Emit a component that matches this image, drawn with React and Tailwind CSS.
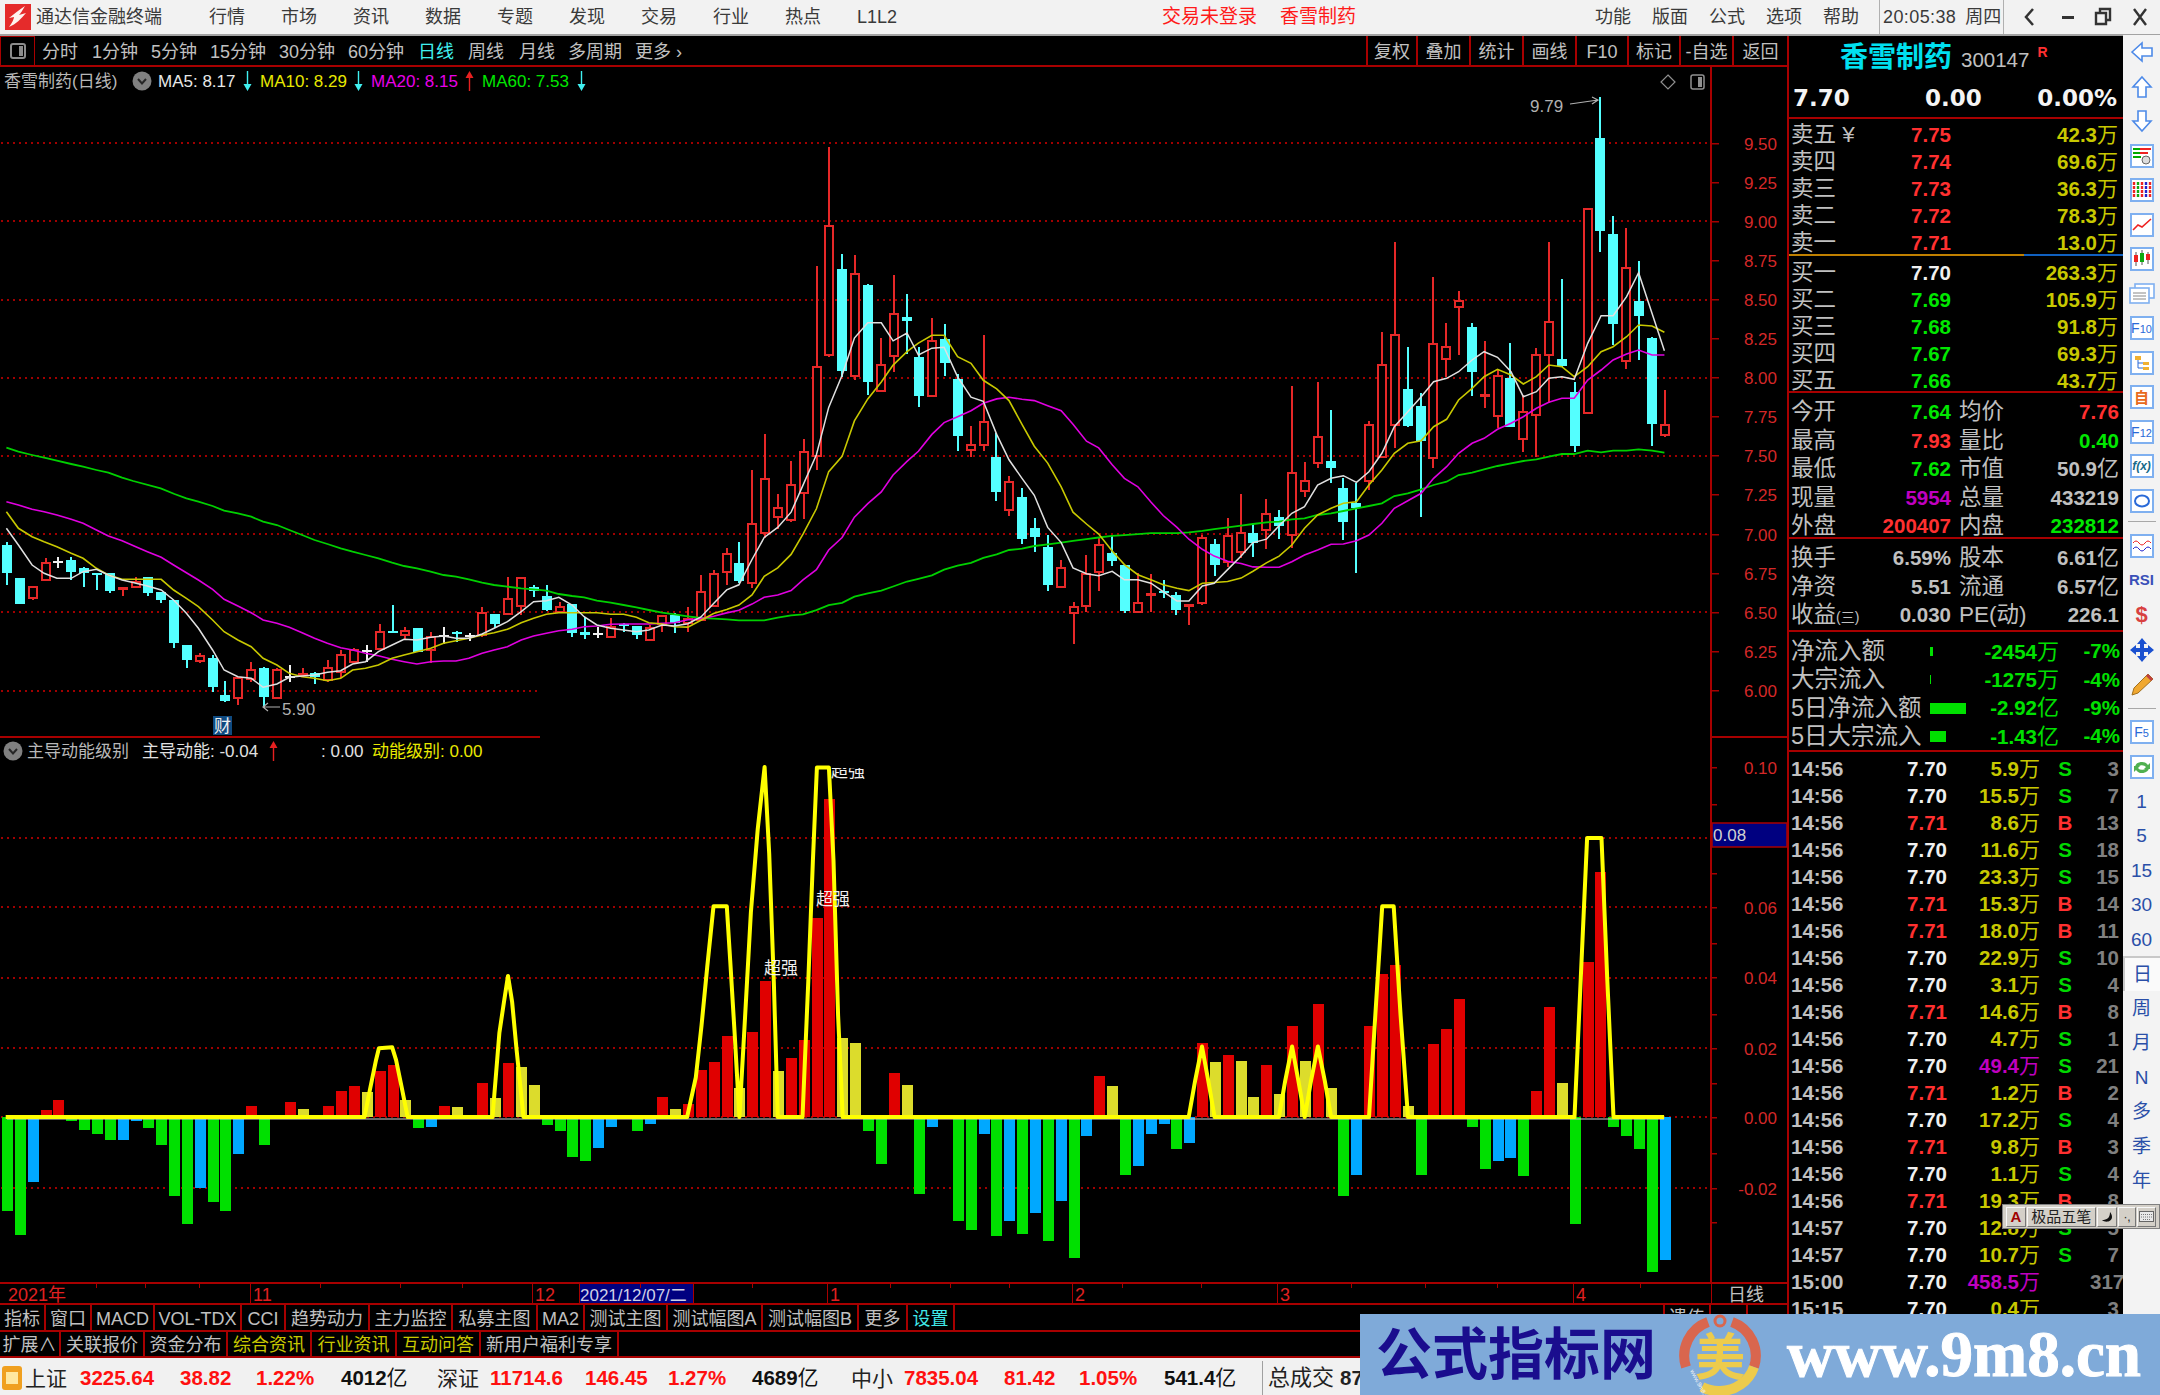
import React from 'react';

const parse = (s) => s.trim().split(/\s+/).map((t) => {
  const [a, b, c, d] = t.slice(1).split(',').map(Number);
  return { k: t[0], a, b, c, d };
});
const segA = parse(`c195,278,185,315 c293,373,293,373 r322,355,322,360 r250,300,235,303 w245,245,230,265 c240,275,232,300 c263,280,260,320 c280,285,280,330 c280,333,280,338 r322,328,322,347 r305,320,290,325 c290,338,290,347 c337,360,337,370 c360,490,360,505 c495,540,495,563 r528,543,520,550 c535,622,525,635 c645,662,603,666 r595,655,590,675 r570,598,545,605 c563,652,560,680 r570,655,565,658 w590,590,555,605 r578,588,565,590 c578,592,575,612 r565,600,540,605 r525,575,510,595 r510,545,505,548 w512,512,495,545 r457,508,432,510 c452,455,375,455 r452,464,442,478 c443,515,443,515 r472,510,455,548 w468,468,442,492 c455,460,452,485 w467,467,460,483 r398,465,380,470 c402,432,402,445 r358,403,290,405 r295,377,295,405 c320,333,315,352 c348,390,315,392 r380,397,365,400 c372,458,372,472 c455,464,410,478 w462,462,440,475 r442,472,415,473 c432,437,430,455 c438,465,438,478 r443,480,435,482 r407,432,405,455 c405,430,400,460`);
const segB = parse(`r1475,1488,1440,1515 r1395,1480,1345,1480 r1342,1438,1332,1440 r1285,1338,1265,1375 c1310,1365,1248,1370 r1195,1370,1035,1385 r1062,1223,928,1235 r1147,1175,1105,1210 r1080,1183,1008,1190 r982,1103,945,1180 r730,993,432,1035 r313,695,80,700 c440,742,395,760 r455,757,400,768 c488,776,485,812 r725,803,645,805 r574,698,458,745 c582,596,516,692 c702,817,670,848 r655,817,587,820 c648,718,604,758 c765,936,750,980 r962,975,905,998 r894,962,635,980 c998,1100,925,1127 r1072,1153,1052,1170 c1115,1238,1088,1255 c1208,1233,1178,1278 c1262,1376,1228,1392 r1325,1380,1302,1385 r1440,1458,1427,1550 r1342,1437,1288,1456 r1258,1338,1235,1392 c1280,1305,1228,1318 c1316,1452,1316,1458 r1428,1455,1340,1458 r1400,1409,1342,1455 c1394,1398,1360,1415 c1405,1450,1395,1465 r1432,1437,1432,1495 r1237,1428,1228,1434 c1253,1317,1240,1350 r1232,1308,1178,1322 r1222,1278,1105,1295 c1222,1250,1195,1292 r1165,1212,1120,1270 c1175,1200,1155,1238`);
const segC = parse(`r1180,1365,917,1405 r1202,1232,1147,1250 r1072,1150,905,1165 c1143,1165,990,1210 c1225,1325,1195,1380 c1270,1285,1210,1480 r1035,1202,1022,1230 r855,1130,755,1135 r765,1035,485,1105 c927,1038,800,1042 c977,1082,940,1312 r792,1135,590,1165 r802,838,728,890 r662,680,633,825 c742,875,728,948 r942,945,783,985 r888,1008,870,1045 c895,1040,790,1042 r995,1077,945,1115 r825,1005,805,1130 r725,825,485,968 c837,858,597,860 c935,1097,905,1115 r387,1000,387,1000 c175,452,52,517 c463,732,408,795 r563,843,445,868 c662,708,543,840 c773,1032,770,1097 r1036,1065,930,1070`);
const candles = [
  ...segA.map((d) => ({ ...d, f: (y) => 480 + y / 3 })),
  ...segB.map((d) => ({ ...d, f: (y) => 120 + y / 2.958 })),
  ...segC.map((d) => ({ ...d, f: (y) => 80 + y / 3 })),
];
const barX = (i) => 7 + 12.85 * i;

const pts = (s) => s.trim().split(/\s+/).map((p) => p.split(',').map(Number));
const line = (a, b, c) => [
  ...pts(a).map(([x, y]) => [x / 2.1778, 480 + y / 3]).filter(([x]) => x < 682),
  ...pts(b).map(([x, y]) => [680 + x / 2.529, 120 + y / 2.958]).filter(([x]) => x >= 682 && x < 1285),
  ...pts(c).map(([x, y]) => [1230 + x / 2.751, 80 + y / 3]).filter(([x]) => x >= 1285),
].map(([x, y]) => `${x.toFixed(1)},${y.toFixed(1)}`).join(' ');

const ma5 = line(
  '14,145 40,195 70,255 96,280 124,295 155,295 181,275 210,268 236,285 266,300 292,308 321,318 351,330 378,360 406,400 432,445 463,510 488,570 518,590 547,595 573,622 603,612 630,592 658,588 685,585 713,577 742,572 768,552 796,545 824,515 854,495 880,478 908,480 938,472 966,468 993,475 1021,475 1050,462 1076,445 1105,425 1135,395 1162,365 1190,362 1217,352 1246,375 1272,410 1300,435 1330,445 1358,450 1386,455 1413,450 1442,435 1469,438',
  '20,1490 53,1470 85,1430 118,1390 149,1375 182,1300 213,1235 247,1205 281,1160 311,1080 345,990 376,850 410,755 441,645 475,600 509,600 539,653 574,630 603,695 637,675 668,672 702,760 736,820 767,832 801,930 832,1005 865,1060 896,1110 930,1205 964,1250 994,1325 1028,1342 1059,1348 1093,1335 1124,1360 1158,1360 1191,1370 1222,1395 1257,1423 1287,1423 1321,1378 1351,1370 1385,1330 1419,1290 1449,1250 1483,1240 1515,1200',
  '170,1300 205,1280 241,1215 278,1195 312,1187 348,1207 382,1175 418,1120 452,1040 489,995 526,950 560,905 596,895 629,875 666,840 699,815 736,832 773,875 807,950 843,935 877,895 913,890 947,898 984,790 1021,707 1054,707 1091,650 1124,578 1161,700 1195,812');
const ma10 = line(
  '14,95 40,145 70,170 96,185 124,200 155,220 181,235 210,265 236,285 266,298 292,298 321,298 351,298 378,330 406,355 432,380 463,420 488,455 518,480 547,500 573,535 603,555 630,580 658,590 685,595 713,602 742,595 768,570 796,565 824,555 854,535 880,525 908,515 938,505 966,490 993,482 1021,475 1050,465 1076,458 1105,448 1135,428 1162,415 1190,403 1217,398 1246,398 1272,398 1300,398 1330,403 1358,403 1386,412 1413,428 1442,432 1469,440',
  '20,1500 53,1480 85,1460 118,1448 149,1435 182,1405 213,1350 247,1325 281,1285 311,1225 345,1150 376,1040 410,995 441,890 475,825 509,775 539,725 574,685 603,660 637,637 668,637 702,700 736,720 767,770 801,795 832,830 865,900 896,965 930,1015 964,1085 994,1160 1028,1195 1059,1225 1093,1275 1124,1315 1158,1345 1191,1360 1222,1375 1257,1385 1287,1392 1321,1370 1351,1368 1385,1365 1419,1355 1449,1335 1483,1310 1515,1290',
  '170,1395 205,1345 241,1305 278,1285 312,1270 348,1265 382,1215 418,1170 452,1120 489,1090 526,1082 560,1040 596,1018 629,960 666,925 699,890 736,868 773,885 807,912 843,890 877,855 913,860 947,890 984,860 1021,815 1054,800 1091,770 1124,735 1161,738 1195,757');
const ma20 = line(
  '14,65 40,75 70,88 96,95 124,105 155,118 181,130 210,150 236,168 266,182 292,198 321,215 351,232 378,255 406,278 432,300 463,328 488,358 518,378 547,398 573,420 603,430 630,442 658,458 685,475 713,490 742,503 768,510 796,520 824,527 854,538 880,545 908,552 938,545 966,543 993,543 1021,535 1050,520 1076,510 1105,500 1135,480 1162,468 1190,460 1217,452 1246,448 1272,440 1300,438 1330,433 1358,432 1386,432 1413,432 1442,430 1469,428',
  '20,1478 53,1475 85,1468 118,1458 149,1450 182,1432 213,1412 247,1405 281,1392 311,1360 345,1330 376,1272 410,1235 441,1175 475,1135 509,1100 539,1050 574,1010 603,980 637,930 668,895 702,878 736,860 767,838 801,825 832,820 865,826 896,830 930,845 964,860 994,900 1028,950 1059,970 1093,1020 1124,1060 1158,1085 1191,1130 1222,1170 1257,1205 1287,1240 1321,1270 1351,1290 1385,1305 1419,1312 1449,1322 1483,1323 1515,1323',
  '170,1445 205,1425 241,1410 278,1393 312,1392 348,1382 382,1365 418,1330 452,1285 489,1262 526,1240 560,1195 596,1160 629,1120 666,1090 699,1075 736,1048 773,1030 807,1010 843,985 877,967 913,955 947,955 984,900 1021,870 1054,840 1091,822 1124,810 1161,825 1195,825');
const ma60 = line(
  '14,-97 40,-85 70,-75 96,-67 124,-58 155,-48 181,-40 210,-30 236,-22 266,-7 290,3 350,25 380,42 406,55 432,65 463,78 488,92 518,100 547,110 573,125 603,135 630,150 658,165 685,180 713,192 742,205 768,215 796,225 824,235 854,248 880,258 908,265 938,275 966,285 993,290 1021,298 1050,308 1076,315 1105,320 1135,325 1162,328 1190,332 1217,342 1246,348 1272,352 1300,362 1330,368 1358,375 1386,382 1413,390 1442,398 1469,403',
  '20,1468 53,1473 85,1475 118,1477 149,1480 182,1480 213,1480 247,1472 281,1465 311,1462 345,1450 376,1435 410,1428 441,1410 475,1400 509,1392 539,1380 574,1365 603,1357 637,1347 668,1330 702,1318 736,1310 767,1295 801,1285 832,1272 865,1268 896,1260 930,1255 964,1250 994,1245 1028,1240 1059,1235 1093,1230 1124,1228 1158,1225 1191,1222 1222,1222 1257,1222 1287,1220 1321,1215 1351,1210 1385,1205 1419,1200 1449,1195 1483,1190 1515,1188',
  '170,1318 205,1315 241,1305 278,1300 312,1293 348,1285 382,1278 418,1270 452,1248 489,1240 526,1228 560,1215 596,1205 629,1185 666,1178 699,1168 736,1158 773,1150 807,1143 843,1138 877,1130 913,1122 947,1122 984,1112 1021,1117 1054,1112 1091,1112 1124,1108 1161,1112 1195,1118');

const osc = 'g1367 g1437 b1283 r1075 r1045 g1105 g1132 g1145 g1162 b1162 b1105 g1128 g1175 g1323 g1406 b1302 g1341 g1367 b1201 r1063 g1175 n0 r1050 y1072 n0 r1063 r1018 r1006 y1023 r962 r945 y1045 g1128 b1123 r1063 y1067 n0 r997 y1040 r937 y950 y1002 g1118 g1136 g1210 g1222 b1184 b1123 n0 g1136 b1114 r1037 y1071 r1058 r958 r936 r861 y1010 r849 r700 y962 r923 r870 r518 r172 y866 y879 g1136 g1232 r967 y1001 g1318 b1123 n0 g1397 g1423 b1145 g1440 b1397 g1436 b1375 g1454 b1340 g1505 b1149 r975 y1006 g1262 b1236 b1145 b1114 g1188 b1171 r880 y936 r914 y931 y1036 r945 y1027 r830 y931 r767 y1010 g1323 b1262 r830 r680 r654 y1062 g1262 r884 r840 r753 g1123 g1245 b1223 b1214 g1267 r1018 r775 y997 g1406 r644 r382 g1123 g1149 g1188 g1545 b1510'.split(' ');
const oscColor = { g: '#00e000', b: '#00a8ff', r: '#e00000', y: '#dcdc2c' };
const oY = (z) => 740 + z / 2.904;

const yellowA = '10,1095 635,1095 645,1010 655,930 660,895 683,892 690,930 700,1010 710,1095 858,1095 870,850 878,760 885,685 892,760 900,900 912,1095 1197,1095 1212,980 1222,830 1232,660 1243,483 1266,483 1272,640 1280,860 1288,1095 1296,860 1308,500 1320,260 1332,78 1340,330 1348,700 1355,1095 1398,1095 1408,700 1416,350 1423,80 1444,80 1452,350 1460,800 1468,1095 1560,1095';
const yellowB = '0,1095 503,1095 514,990 526,890 537,990 548,1095 660,1095 671,990 683,890 694,990 705,1095 716,990 728,890 740,990 751,1095 817,1095 828,800 840,483 860,483 872,800 885,1095 1175,1095 1186,690 1197,285 1222,285 1232,690 1243,1095 1331,1095';
const yellow = [
  ...pts(yellowA).map(([x, y]) => [x / 1.742, oY(y)]),
  ...pts(yellowB).map(([x, y]) => [900 + x / 1.742, oY(y)]),
].map(([x, y]) => `${x.toFixed(1)},${y.toFixed(1)}`).join(' ');

const mainLabels = ['9.50', '9.25', '9.00', '8.75', '8.50', '8.25', '8.00', '7.75', '7.50', '7.25', '7.00', '6.75', '6.50', '6.25', '6.00'];
const oscLabels = [['0.10', 767], ['0.06', 907], ['0.04', 977], ['0.02', 1048], ['0.00', 1117], ['-0.02', 1188]];
const oscTicks = [767, 804, 838, 873, 907, 943, 977, 1014, 1048, 1083, 1117, 1153, 1188, 1222];

function OscBars() {
  const zero = Math.round(oY(1095));
  return osc.map((t, i) => {
    if (t[0] === 'n') return null;
    const y = Math.round(oY(Number(t.slice(1))));
    const x = Math.round(barX(i)) - 5;
    const top = Math.min(y, zero);
    return <rect key={i} x={x} y={top} width="11" height={Math.abs(zero - y)} fill={oscColor[t[0]]} shapeRendering="crispEdges" />;
  });
}

function MainChart() {
  return (
    <svg width="1787" height="1215" viewBox="0 67 1787 1215" className="block">
      <defs>
        <clipPath id="topclip"><rect x="800" y="768" width="100" height="30" /></clipPath>
      </defs>
      {[143, 221, 300, 378, 456, 534, 612].map((y) => (
        <line key={y} x1="1" x2="1710" y1={y} y2={y} stroke="#a00000" strokeWidth="1.5" strokeDasharray="2 4" shapeRendering="crispEdges" />
      ))}
      <line x1="1" x2="540" y1="691" y2="691" stroke="#a00000" strokeWidth="1.5" strokeDasharray="2 4" shapeRendering="crispEdges" />
      {[838, 907, 978, 1048, 1117, 1188].map((y) => (
        <line key={y} x1="1" x2="1710" y1={y} y2={y} stroke="#a00000" strokeWidth="1.5" strokeDasharray="2 4" shapeRendering="crispEdges" />
      ))}
      <rect x="1710" y="67" width="2" height="1215" fill="#a80000" />
      <rect x="0" y="736" width="540" height="2" fill="#a80000" />
      <rect x="1710" y="736" width="77" height="2" fill="#a80000" />
      {mainLabels.map((t, i) => {
        const y = 143 + i * 39.05;
        return (
          <g key={t}>
            <rect x="1711" y={Math.round(y)} width="8" height="1.5" fill="#a80000" />
            <text x="1777" y={y + 7} textAnchor="end" fontSize="17" fill="#d42828">{t}</text>
          </g>
        );
      })}
      {oscTicks.map((y) => <rect key={y} x="1711" y={y} width="6" height="1.5" fill="#a80000" />)}
      {oscLabels.map(([t, y]) => (
        <text key={t} x="1777" y={y + 7} textAnchor="end" fontSize="17" fill="#d42828">{t}</text>
      ))}
      <rect x="1712" y="823" width="75" height="24" fill="#000080" stroke="#a80000" strokeWidth="1.5" />
      <text x="1713" y="841" fontSize="17" fill="#d0d0d0">0.08</text>

      {candles.map((c, i) => {
        const x = Math.round(barX(i));
        const top = Math.round(c.f(c.a));
        const bot = Math.round(c.f(c.b));
        const wt = Math.round(c.f(c.c));
        const wb = Math.round(c.f(c.d));
        if (c.k === 'w') {
          return (
            <g key={i} fill="#f0f0f0" shapeRendering="crispEdges">
              <rect x={x - 1} y={wt} width="2" height={wb - wt} />
              <rect x={x - 5} y={top - 1} width="10" height="2" />
            </g>
          );
        }
        if (c.k === 'c') {
          return (
            <g key={i} fill="#54ffff" shapeRendering="crispEdges">
              <rect x={x - 1} y={wt} width="2" height={wb - wt} />
              <rect x={x - 5} y={top} width="10" height={Math.max(bot - top, 2)} />
            </g>
          );
        }
        const thin = bot - top < 4;
        return (
          <g key={i} shapeRendering="crispEdges">
            {wb > wt && (
              <>
                <rect x={x - 1} y={wt} width="2" height={Math.max(top - wt, 0)} fill="#e62828" />
                <rect x={x - 1} y={bot} width="2" height={Math.max(wb - bot, 0)} fill="#e62828" />
              </>
            )}
            {thin ? (
              <>
                <rect x={x - 5} y={top} width="10" height="3" fill="#e62828" />
                <rect x={x - 1} y={wt} width="2" height={wb - wt} fill="#e62828" />
              </>
            ) : (
              <rect x={x - 4} y={top} width="8" height={bot - top} fill="#000" stroke="#e62828" strokeWidth="2" />
            )}
          </g>
        );
      })}
      <polyline points={ma60} fill="none" stroke="#00d000" strokeWidth="1.8" />
      <polyline points={ma20} fill="none" stroke="#e000e0" strokeWidth="1.6" />
      <polyline points={ma10} fill="none" stroke="#c8c800" strokeWidth="1.6" />
      <polyline points={ma5} fill="none" stroke="#e0e0e0" strokeWidth="1.5" />

      <text x="1530" y="112" fontSize="17" fill="#b0b0b0">9.79</text>
      <path d="M1570 104 L1598 100 M1592 97 L1598 100 L1592 104" fill="none" stroke="#b0b0b0" strokeWidth="1.2" />
      <text x="282" y="715" fontSize="17" fill="#b0b0b0">5.90</text>
      <path d="M263 707 L280 707 M268 703 L263 707 L268 711" fill="none" stroke="#b0b0b0" strokeWidth="1.2" />
      <rect x="213" y="716" width="19" height="19" fill="#0f4a80" />
      <text x="222.5" y="732" textAnchor="middle" fontSize="17" fill="#f0f0f0">财</text>
      <path d="M1668 75 L1675 82 L1668 89 L1661 82 Z" fill="none" stroke="#909090" strokeWidth="1.2" />
      <rect x="1691" y="75" width="13" height="14" rx="2" fill="none" stroke="#909090" strokeWidth="1.5" />
      <rect x="1698" y="77" width="4" height="10" fill="#909090" />

      <OscBars />
      <line x1="7" x2="1664" y1="1119" y2="1119" stroke="#d0d0d0" strokeWidth="1" />
      <polyline points={yellow} fill="none" stroke="#ffff00" strokeWidth="4" strokeLinejoin="round" />
      <text x="781" y="974" textAnchor="middle" fontSize="17" fill="#f0f0f0">超强</text>
      <text x="833" y="905" textAnchor="middle" fontSize="17" fill="#f0f0f0">超强</text>
      <text x="848" y="777" textAnchor="middle" fontSize="17" fill="#f0f0f0" clipPath="url(#topclip)">超强</text>
    </svg>
  );
}

function VArrow({ up, color }) {
  return (
    <svg width="9" height="22" viewBox="0 0 9 22" className="block shrink-0">
      {up ? (
        <path d="M4.5 1 L8.5 8 L5.2 8 L5.2 21 L3.8 21 L3.8 8 L0.5 8 Z" fill={color} />
      ) : (
        <path d="M4.5 21 L8.5 14 L5.2 14 L5.2 1 L3.8 1 L3.8 14 L0.5 14 Z" fill={color} />
      )}
    </svg>
  );
}
function Chevron() {
  return (
    <svg width="20" height="20" viewBox="0 0 20 20" className="block shrink-0">
      <circle cx="10" cy="10" r="9.5" fill="#808080" />
      <path d="M6 8 L10 12.5 L14 8" fill="none" stroke="#262626" strokeWidth="2" />
    </svg>
  );
}

function TitleBar() {
  const nav = ['行情', '市场', '资讯', '数据', '专题', '发现', '交易', '行业', '热点', 'L1L2'];
  const right = [['功能', 'w-[57px]'], ['版面', 'w-[57px]'], ['公式', 'w-[57px]'], ['选项', 'w-[57px]'], ['帮助', 'w-[56px]']];
  return (
    <div className="flex h-[36px] items-center bg-[#f2f2f2] border-b-2 border-[#a2a2a2] text-[#3a3a3a] text-[18px] shrink-0">
      <svg width="26" height="26" viewBox="0 0 26 26" className="ml-[5px] block shrink-0">
        <rect width="26" height="26" fill="#e52b2b" />
        <path d="M20 2 C17 7 16 9 14 11 L21 9 C16 15 11 20 4 23 C7 19 9 15 9 13 L4 14 C9 10 14 6 20 2 Z" fill="#fdf4f0" />
      </svg>
      <div className="ml-[5px] w-[173px]">通达信金融终端</div>
      {nav.map((t) => <div key={t} className="w-[72px]">{t}</div>)}
      <div className="ml-[233px] w-[118px] text-[19px] text-[#ff1a1a]">交易未登录</div>
      <div className="w-[315px] text-[19px] text-[#ff1a1a]">香雪制药</div>
      {right.map(([t, w]) => <div key={t} className={w}>{t}</div>)}
      <div className="flex h-full w-[125px] items-center gap-[9px] border-x border-[#b0b0b0] pl-[3px]">
        <span className="tracking-[0.4px]">20:05:38</span>
        <span>周四</span>
      </div>
      <svg width="156" height="28" viewBox="0 0 156 28" className="block shrink-0">
        <path d="M29 6 L22 14 L29 22" fill="none" stroke="#333" strokeWidth="2.5" />
        <rect x="58" y="13" width="12" height="3" fill="#333" />
        <path d="M92 10 h10 v11 h-10 Z M96 10 v-4 h10 v11 h-4" fill="none" stroke="#333" strokeWidth="2.4" />
        <path d="M130 6 L142 22 M142 6 L130 22" stroke="#333" strokeWidth="2.4" />
      </svg>
    </div>
  );
}

function ToolBar() {
  const items = [
    ['分时', 'w-[50px]'], ['1分钟', 'w-[59px]'], ['5分钟', 'w-[59px]'], ['15分钟', 'w-[69px]'], ['30分钟', 'w-[69px]'], ['60分钟', 'w-[70px]'],
    ['日线', 'w-[50px] text-[#40f0f0]'], ['周线', 'w-[51px]'], ['月线', 'w-[49px]'], ['多周期', 'w-[67px]'], ['更多 ›', 'w-[90px]'],
  ];
  const btns = [['复权', 'w-[50px]'], ['叠加', 'w-[53px]'], ['统计', 'w-[53px]'], ['画线', 'w-[53px]'], ['F10', 'w-[52px]'], ['标记', 'w-[52px]'], ['-自选', 'w-[53px]'], ['返回', 'w-[55px]']];
  return (
    <div className="flex h-[31px] items-stretch border-b-2 border-[#a80000] text-[#c0c0c0] text-[18px] shrink-0">
      <div className="flex w-[35px] items-center justify-center border-x border-t border-[#a80000]">
        <svg width="16" height="16" viewBox="0 0 16 16"><rect x="1" y="1" width="14" height="14" rx="2" fill="none" stroke="#8c8c8c" strokeWidth="2" /><rect x="9" y="3" width="4" height="10" fill="#8c8c8c" /></svg>
      </div>
      <div className="flex items-center pl-[7px] pt-[4px]">
        {items.map(([t, c]) => <div key={t} className={c}>{t}</div>)}
      </div>
      <div className="ml-auto flex">
        {btns.map(([t, c]) => <div key={t} className={`${c} flex items-center justify-center border-l-2 border-[#a80000] pt-[4px]`}>{t}</div>)}
      </div>
    </div>
  );
}

function ChartArea() {
  return (
    <div className="relative h-[1215px] shrink-0">
      <MainChart />
      <div className="absolute left-[4px] top-[3px] flex items-center text-[17px] leading-none">
        <span className="w-[127px] text-[#b8b8b8]">香雪制药(日线)</span>
        <span className="ml-[1px]"><Chevron /></span>
        <span className="ml-[6px] w-[85px] text-[#e8e8e8]">MA5: 8.17</span>
        <VArrow color="#40f0f0" />
        <span className="ml-[8px] w-[94px] text-[#e8e800]">MA10: 8.29</span>
        <VArrow color="#40f0f0" />
        <span className="ml-[8px] w-[94px] text-[#e800e8]">MA20: 8.15</span>
        <VArrow up color="#e62020" />
        <span className="ml-[8px] w-[95px] text-[#00e800]">MA60: 7.53</span>
        <VArrow color="#40f0f0" />
      </div>
      <div className="absolute left-[3px] top-[673px] flex items-center text-[17px] leading-none">
        <Chevron />
        <span className="ml-[4px] w-[115px] text-[#b8b8b8]">主导动能级别</span>
        <span className="w-[127px] text-[#e0e0e0]">主导动能: -0.04</span>
        <VArrow up color="#e62020" />
        <span className="ml-[43px] w-[51px] text-[#e0e0e0]">: 0.00</span>
        <span className="text-[#e8e800]">动能级别: 0.00</span>
      </div>
    </div>
  );
}

function DateRow() {
  const cells = [
    ['2021年', 'w-[250px] pl-[8px]'], ['11', 'w-[282px] pl-[2px] border-l'], ['12', 'w-[47px] pl-[2px] border-l'],
    ['2021/12/07/二', 'w-[115px] bg-[#000080] text-[#d0d0e8] border-x whitespace-nowrap text-[17px]'], ['', 'w-[133px]'], ['1', 'w-[245px] pl-[2px] border-l'],
    ['2', 'w-[205px] pl-[2px] border-l'], ['3', 'w-[296px] pl-[2px] border-l'], ['4', 'w-[138px] pl-[2px] border-l'],
    ['日线', 'w-[76px] pl-[16px] border-l text-[#c0c0c0]'],
  ];
  const ticks = [96, 145, 199, 320, 400, 462, 640, 752, 890, 950, 1009, 1122, 1201, 1351, 1425, 1497, 1640];
  return (
    <div className="relative flex h-[23px] border-y-2 border-[#a80000] text-[18px] leading-none text-[#e02020] shrink-0">
      {cells.map(([t, c], i) => <div key={i} className={`${c} flex items-center border-[#a80000] pt-[3px]`}>{t}</div>)}
      <svg width="1711" height="4" className="absolute left-0 top-0 block">
        {ticks.map((x) => <rect key={x} x={x} y="0" width="1" height="4" fill="#a80000" />)}
      </svg>
    </div>
  );
}

function TabRow({ items, extra }) {
  return (
    <div className="flex h-[26.5px] items-stretch border-b-2 border-[#a80000] text-[18px] leading-none text-[#c0c0c0] shrink-0">
      {items.map(([t, c]) => <div key={t} className={`${c} flex items-center justify-center border-r-2 border-[#a80000] pt-[3px]`}>{t}</div>)}
      {extra}
    </div>
  );
}

function BottomTabs() {
  const one = [
    ['指标', 'w-[46px]'], ['窗口', 'w-[46px]'], ['MACD', 'w-[63px]'], ['VOL-TDX', 'w-[87px]'], ['CCI', 'w-[44px]'], ['趋势动力', 'w-[84px]'], ['主力监控', 'w-[83px]'],
    ['私募主图', 'w-[85px]'], ['MA2', 'w-[47px]'], ['测试主图', 'w-[83px]'], ['测试幅图A', 'w-[95px]'], ['测试幅图B', 'w-[96px]'], ['更多', 'w-[49px]'], ['设置', 'w-[47px] text-[#40e8e8]'],
  ];
  const two = [
    ['扩展∧', 'w-[61px]'], ['关联报价', 'w-[84px]'], ['资金分布', 'w-[83px]'], ['综合资讯', 'w-[84px] text-[#c8c800]'], ['行业资讯', 'w-[85px] text-[#c8c800]'],
    ['互动问答', 'w-[84px] text-[#c8c800]'], ['新用户福利专享', 'w-[138px]'],
  ];
  return (
    <>
      <TabRow items={one} extra={
        <div className="ml-[708px] flex">
          <div className="w-[48px] border-x-2 border-[#a80000] pl-[4px] text-[18px] leading-[26px]">遗传</div>
          <div className="w-[37px] border-r-2 border-[#a80000]" />
        </div>
      } />
      <TabRow items={two} />
    </>
  );
}

function QRow({ label, p, pc, v, vc = 'text-[#c8c800]', u = '万' }) {
  return (
    <div className="flex h-[27px] items-center pt-[5px] leading-none">
      <div className="flex w-[162px] items-center justify-between pl-[2px]">
        <span className="text-[22.5px] font-normal text-[#c0c0c0]">{label}</span>
        <span className={`text-[20.5px] font-bold ${pc}`}>{p}</span>
      </div>
      <div className={`w-[167px] text-right ${vc}`}>
        <span className="text-[20.5px] font-bold">{v}</span>
        <span className="text-[21px]">{u}</span>
      </div>
    </div>
  );
}
function KV({ a, av, ac = 'text-[#c0c0c0]', b, bv, bc = 'text-[#c0c0c0]', u }) {
  return (
    <div className="flex h-[28.6px] items-center pt-[8px] leading-none">
      <div className="flex w-[162px] items-center justify-between pl-[2px]">
        <span className="text-[22.5px] text-[#c0c0c0]">{a}</span>
        <span className={`text-[20.5px] font-bold ${ac}`}>{av}</span>
      </div>
      <div className="flex w-[168px] items-center justify-between pl-[8px]">
        <span className="text-[22.5px] text-[#c0c0c0]">{b}</span>
        <span className={bc}><span className="text-[20.5px] font-bold">{bv}</span>{u && <span className="text-[22px]">{u}</span>}</span>
      </div>
    </div>
  );
}
function Flow({ l, bar, v, u, pct }) {
  return (
    <div className="flex h-[28.3px] items-center pt-[8px] leading-none text-[#00e000]">
      <div className="w-[141px] whitespace-nowrap pl-[2px] text-[23.5px] text-[#c0c0c0]">{l}</div>
      <div className="flex w-[45px] items-center">{bar}</div>
      <div className="w-[84px] whitespace-nowrap text-right"><span className="text-[20.5px] font-bold">{v}</span><span className="text-[22px]">{u}</span></div>
      <div className="w-[61px] text-right text-[20.5px] font-bold">{pct}</div>
    </div>
  );
}

const sells = [['卖五 ¥', '7.75', '42.3'], ['卖四', '7.74', '69.6'], ['卖三', '7.73', '36.3'], ['卖二', '7.72', '78.3'], ['卖一', '7.71', '13.0']];
const buys = [['买一', '7.70', '263.3', 'text-[#f0f0f0]'], ['买二', '7.69', '105.9'], ['买三', '7.68', '91.8'], ['买四', '7.67', '69.3'], ['买五', '7.66', '43.7']];
const trades = [
  ['14:56', '7.70', '5.9', 'S', '3'], ['14:56', '7.70', '15.5', 'S', '7'], ['14:56', '7.71', '8.6', 'B', '13'], ['14:56', '7.70', '11.6', 'S', '18'],
  ['14:56', '7.70', '23.3', 'S', '15'], ['14:56', '7.71', '15.3', 'B', '14'], ['14:56', '7.71', '18.0', 'B', '11'], ['14:56', '7.70', '22.9', 'S', '10'],
  ['14:56', '7.70', '3.1', 'S', '4'], ['14:56', '7.71', '14.6', 'B', '8'], ['14:56', '7.70', '4.7', 'S', '1'], ['14:56', '7.70', '49.4', 'S', '21'],
  ['14:56', '7.71', '1.2', 'B', '2'], ['14:56', '7.70', '17.2', 'S', '4'], ['14:56', '7.71', '9.8', 'B', '3'], ['14:56', '7.70', '1.1', 'S', '4'],
  ['14:56', '7.71', '19.3', 'B', '8'], ['14:57', '7.70', '12.8', 'S', '5'], ['14:57', '7.70', '10.7', 'S', '7'], ['15:00', '7.70', '458.5', '', '317'], ['15:15', '7.70', '0.4', '', '3'],
];

function QuotePanel() {
  return (
    <div className="flex w-[336px] shrink-0 flex-col overflow-hidden border-l-2 border-[#a80000] text-[#c0c0c0]">
      <div className="flex h-[44px] shrink-0 items-center pl-[51px] leading-none">
        <span className="text-[28px] font-bold text-[#00e0f0]">香雪制药</span>
        <span className="ml-[9px] mt-[4px] text-[20.5px]">300147</span>
        <span className="mb-[12px] ml-[8px] text-[14px] font-bold text-[#ff3030]">R</span>
      </div>
      <div className="flex h-[39px] shrink-0 items-center border-b-2 border-[#a80000] pl-[4px] font-['DejaVu_Sans'] text-[23px] font-bold leading-none text-[#f4f4f4]">
        <span className="w-[132px]">7.70</span>
        <span className="w-[102px]">0.00</span>
        <span className="w-[90px] text-right">0.00%</span>
      </div>
      <div className="h-[135px] shrink-0">
        {sells.map(([l, p, v]) => <QRow key={l} label={l} p={p} pc="text-[#ff3030]" v={v} />)}
      </div>
      <div className="flex h-[2px] shrink-0">
        <div className="w-[235px] bg-[#c08000]" />
        <div className="flex-1 bg-[#1060c0]" />
      </div>
      <div className="h-[137px] shrink-0 border-b-2 border-[#a80000] pt-[1px]">
        {buys.map(([l, p, v, c]) => <QRow key={l} label={l} p={p} pc={c || 'text-[#00e800]'} v={v} />)}
      </div>
      <div className="h-[146px] shrink-0 border-b-2 border-[#a80000] pt-[1px]">
        <KV a="今开" av="7.64" ac="text-[#00e800]" b="均价" bv="7.76" bc="text-[#ff3030]" />
        <KV a="最高" av="7.93" ac="text-[#ff3030]" b="量比" bv="0.40" bc="text-[#00e800]" />
        <KV a="最低" av="7.62" ac="text-[#00e800]" b="市值" bv="50.9" u="亿" />
        <KV a="现量" av="5954" ac="text-[#c000c0]" b="总量" bv="433219" />
        <KV a="外盘" av="200407" ac="text-[#ff3030]" b="内盘" bv="232812" bc="text-[#00e800]" />
      </div>
      <div className="h-[92.5px] shrink-0 border-b-2 border-[#a80000] pt-[1px]">
        <KV a="换手" av="6.59%" b="股本" bv="6.61" u="亿" />
        <KV a="净资" av="5.51" b="流通" bv="6.57" u="亿" />
        <KV a={<>收益<span className="text-[14px]">(三)</span></>} av="0.030" b="PE(动)" bv="226.1" />
      </div>
      <div className="h-[120px] shrink-0 border-b-2 border-[#a80000] pt-[2px]">
        <Flow l="净流入额" bar={<div className="h-[9px] w-[3px] bg-[#00e000]" />} v="-2454" u="万" pct="-7%" />
        <Flow l="大宗流入" bar={<div className="h-[9px] w-[1px] bg-[#00e000]" />} v="-1275" u="万" pct="-4%" />
        <Flow l="5日净流入额" bar={<div className="h-[11px] w-[36px] bg-[#00e000]" />} v="-2.92" u="亿" pct="-9%" />
        <Flow l="5日大宗流入" bar={<div className="h-[11px] w-[16px] bg-[#00e000]" />} v="-1.43" u="亿" pct="-4%" />
      </div>
      <div className="pt-[1px]">
        {trades.map(([t, p, v, s, n], i) => (
          <div key={i} className="flex h-[27px] items-center pt-[6px] text-[20.5px] font-bold leading-none">
            <div className="w-[158px] flex-none">
              <div className="flex items-center justify-between pl-[2px]">
                <span className="text-[#c0c0c0]">{t}</span>
                <span className={p === '7.71' ? 'text-[#ff3030]' : 'text-[#f0f0f0]'}>{p}</span>
              </div>
            </div>
            <div className={`w-[93px] flex-none text-right ${Number(v) > 40 ? 'text-[#c000c0]' : 'text-[#c8c800]'}`}>
              {v}<span className="text-[21px] font-normal">万</span>
            </div>
            <div className={`w-[50px] flex-none text-center ${s === 'B' ? 'text-[#ff3030]' : 'text-[#00d800]'}`}>{s}</div>
            <div className="w-[29px] flex-none text-right text-[#808080]">{n}</div>
          </div>
        ))}
      </div>
    </div>
  );
}

const Hollow = ({ d }) => (
  <svg width="26" height="26" viewBox="0 0 26 26" className="block"><path d={d} fill="#fff" stroke="#4d8ae8" strokeWidth="1.6" strokeLinejoin="miter" /></svg>
);
const Box = ({ children }) => (
  <div className="flex h-[24px] w-[24px] items-center justify-center border-2 border-[#7fb0f0] bg-white text-[13px] font-bold leading-none text-[#2a6ad8]">{children}</div>
);
const s20 = { width: 20, height: 20, viewBox: '0 0 20 20', className: 'block' };
const sideIcons = [
  <Hollow d="M3 13 L13 4 L13 9 L23 9 L23 17 L13 17 L13 22 Z" />,
  <Hollow d="M13 3 L22 13 L17 13 L17 23 L9 23 L9 13 L4 13 Z" />,
  <Hollow d="M13 23 L22 13 L17 13 L17 3 L9 3 L9 13 L4 13 Z" />,
  <Box><svg {...s20}><path d="M1 3h12M1 7h10M1 11h8" stroke="#0a0" strokeWidth="2" /><path d="M8 3h11M8 7h8" stroke="#e22" strokeWidth="2" /><circle cx="14" cy="14" r="4" fill="#ddd" stroke="#666" /></svg></Box>,
  <Box><svg {...s20}>{[2, 6, 10, 14, 18].map((x, i) => <path key={x} d={`M${x} 2V18`} stroke={['#e22', '#1a1', '#e22', '#22c', '#e22'][i]} strokeWidth="2.4" strokeDasharray="3 1" />)}</svg></Box>,
  <Box><svg {...s20}><path d="M1 15 L6 10 L10 12 L19 4" fill="none" stroke="#e22" strokeWidth="1.6" /></svg></Box>,
  <Box><svg {...s20}><path d="M4 3V17M10 1V16M16 3V15" stroke="#555" /><rect x="2" y="6" width="4" height="7" fill="#e22" /><rect x="8" y="4" width="4" height="9" fill="#1a1" /><rect x="14" y="5" width="4" height="6" fill="#e22" /></svg></Box>,
  <svg width="26" height="24" viewBox="0 0 26 24" className="block"><rect x="6" y="2" width="19" height="14" fill="#fff" stroke="#7fb0f0" strokeWidth="1.6" /><rect x="1" y="6" width="19" height="15" fill="#fff" stroke="#7fb0f0" strokeWidth="1.6" /><path d="M4 11h13M4 14h13M4 17h13" stroke="#888" /></svg>,
  <Box><span className="text-[14px] font-normal">F<span className="text-[11px]">10</span></span></Box>,
  <Box><svg {...s20}><path d="M3 3h6v4H3zM11 9h6v3h-6zM11 14h6v3h-6z" fill="#f0b030" /><path d="M6 7v8h5M6 10h5" fill="none" stroke="#2a6ad8" /></svg></Box>,
  <Box><span className="text-[15px] text-[#e86a20]">自</span></Box>,
  <Box><span className="text-[14px] font-normal">F<span className="text-[11px]">12</span></span></Box>,
  <Box><span className="text-[12px] italic text-[#186a8a]">f(x)</span></Box>,
  <Box><svg {...s20}><ellipse cx="10" cy="10" rx="7" ry="5.5" fill="none" stroke="#2a6ad8" strokeWidth="2" /></svg></Box>,
  'sep-11',
  <Box><svg {...s20}><path d="M1 7 q3 -4 6 0 t6 0 t6 0" fill="none" stroke="#e22" /><path d="M1 13 q3 -4 6 0 t6 0 t6 0" fill="none" stroke="#22c" /></svg></Box>,
  <span className="text-[15px] font-bold text-[#3a50b8]">RSI</span>,
  <span className="text-[22px] font-bold leading-none text-[#d84040]">$</span>,
  <svg width="26" height="26" viewBox="0 0 26 26" className="block"><path d="M13 1 L18 7 H15 V11 H19 V8 L25 13 L19 18 V15 H15 V19 H18 L13 25 L8 19 H11 V15 H7 V18 L1 13 L7 8 V11 H11 V7 H8 Z" fill="#1a50d0" /></svg>,
  <svg width="26" height="26" viewBox="0 0 26 26" className="block"><path d="M19 3 L24 8 L9 22 L3 24 L5 17 Z" fill="#f0a830" stroke="#a07020" /><path d="M19 3 L24 8 L22 10 L17 5 Z" fill="#c04040" /></svg>,
  'sep-13',
  <Box><span className="text-[14px] font-normal">F<span className="text-[11px]">5</span></span></Box>,
  <Box><svg {...s20}><path d="M3 10 a7 6 0 0 1 13 -2 l2 -2 v6 h-6 l2 -2 a5 4 0 0 0 -9 1 Z M17 11 a7 6 0 0 1 -13 2 l-2 2 v-6 h6 l-2 2 a5 4 0 0 0 9 -1 Z" fill="#50b050" /></svg></Box>,
];
const sideLabels = ['1', '5', '15', '30', '60', '日', '周', '月', 'N', '多', '季', '年'];

function SideBar() {
  return (
    <div className="relative z-10 -mt-[1px] flex w-[37px] shrink-0 flex-col items-center bg-[#f3f3f3]">
      {sideIcons.map((ic, i) => {
        if (ic === 'sep-11') return <div key={i} className="flex h-[10.75px] w-full items-start justify-center pt-[3px]"><div className="h-[1px] w-[28px] bg-[#a8a8a8]" /></div>;
        if (ic === 'sep-13') return <div key={i} className="flex h-[13.5px] w-full items-center justify-center"><div className="h-[1px] w-[28px] bg-[#a8a8a8]" /></div>;
        return <div key={i} className="flex h-[34.5px] w-full items-center justify-center">{ic}</div>;
      })}
      {sideLabels.map((t) => (
        <div key={t} className={`flex h-[34.5px] w-full items-center justify-center text-[19px] leading-none text-[#2a4fa8] ${t === '日' ? 'border-l-2 border-t-2 border-[#c8c8c8] bg-[#fafafa]' : ''}`}>{t}</div>
      ))}
    </div>
  );
}

function ImeBar() {
  return (
    <div className="absolute right-0 top-[1204px] z-20 flex h-[25px] w-[158px] items-center gap-[1px] border border-[#808080] bg-[#d4d0c8] px-[3px] text-[15px] leading-none text-[#222]">
      <div className="flex h-[20px] w-[20px] items-center justify-center border border-[#f8f8f8] border-b-[#777] border-r-[#777] font-bold text-[#a00000]">A</div>
      <div className="flex h-[20px] w-[71px] items-center justify-center border border-[#f8f8f8] border-b-[#777] border-r-[#777]">极品五笔</div>
      <div className="flex h-[20px] w-[20px] items-center justify-center border border-[#f8f8f8] border-b-[#777] border-r-[#777]">
        <svg width="12" height="12" viewBox="0 0 12 12"><path d="M9 1 C9 7 6 9 1 9 C4 12 11 11 11 6 C11 4 10 2 9 1 Z" fill="#111" /></svg>
      </div>
      <div className="flex h-[20px] w-[19px] items-center justify-center border border-[#f8f8f8] border-b-[#777] border-r-[#777] text-[12px]">·,</div>
      <div className="flex h-[20px] w-[19px] items-center justify-center border border-[#f8f8f8] border-b-[#777] border-r-[#777]">
        <svg width="15" height="11" viewBox="0 0 15 11"><rect x="0.5" y="0.5" width="14" height="10" fill="#e8e8e8" stroke="#666" /><path d="M2 3.5h11M2 6h11M4 8.5h7" stroke="#777" strokeDasharray="1 1" /></svg>
      </div>
    </div>
  );
}

function StatusBar() {
  const R = 'font-bold text-[#ff1010] text-[20.5px]';
  const K = 'font-bold text-[#111] text-[20.5px]';
  const items = [
    ['上证', 'w-[55px] text-[21px]'], ['3225.64', `w-[100px] ${R}`], ['38.82', `w-[76px] ${R}`], ['1.22%', `w-[85px] ${R}`],
    ['4012', `w-[96px] ${K}`, '亿'], ['深证', 'w-[53px] text-[21px]'], ['11714.6', `w-[95px] ${R}`], ['146.45', `w-[83px] ${R}`], ['1.27%', `w-[84px] ${R}`],
    ['4689', `w-[99px] ${K}`, '亿'], ['中小', 'w-[53px] text-[21px]'], ['7835.04', `w-[100px] ${R}`], ['81.42', `w-[75px] ${R}`], ['1.05%', `w-[85px] ${R}`], ['541.4', `w-[98px] ${K}`, '亿'],
  ];
  return (
    <div className="flex h-[37px] items-center bg-[#f1f1f1] pt-[3px] leading-none text-[#222] shrink-0">
      <div className="flex w-[25px] items-center pl-[2px]">
        <div className="flex h-[24px] w-[20px] items-center justify-center rounded-[3px] bg-[#f0a020]"><div className="h-[12px] w-[12px] bg-[#ffe8a0]" /></div>
      </div>
      {items.map(([t, c, u], i) => (
        <div key={i} className={`${c} whitespace-nowrap`}>{t}{u && <span className="text-[21px] font-normal">{u}</span>}</div>
      ))}
      <div className="flex h-full items-center whitespace-nowrap border-l border-[#a0a0a0] pl-[5px] text-[22px]">总成交 <span className="ml-[6px] text-[20.5px] font-bold">8701亿</span></div>
    </div>
  );
}

function Watermark() {
  return (
    <div className="absolute bottom-0 left-[1360px] z-30 flex h-[81px] w-[800px] items-center bg-[#7faad9] leading-none">
      <div className="ml-[16px] w-[290px] font-bold text-[56px] text-[#1a0d8e] whitespace-nowrap">公式指标网</div>
      <svg width="84" height="84" viewBox="0 0 84 84" className="ml-[12px] block shrink-0">
        <path d="M8 54 A36 36 0 0 1 30 9" fill="none" stroke="#d9664e" strokeWidth="10" />
        <path d="M54 9 A36 36 0 0 1 76 54" fill="none" stroke="#d9664e" strokeWidth="10" />
        <path d="M76 54 A36 36 0 0 1 42 78 A36 36 0 0 1 24 74" fill="none" stroke="#edcb4c" strokeWidth="10" />
        <circle cx="42" cy="8" r="5" fill="none" stroke="#d9664e" strokeWidth="3" />
        <text x="42" y="62" textAnchor="middle" fontSize="50" fontWeight="700" fill="#edcb4c">美</text>
        <text x="0" y="0" transform="translate(12 58) rotate(62)" fontSize="6" fill="#f4f4f4">www.9m8.cn</text>
      </svg>
      <div className="ml-[25px] font-['Liberation_Serif'] text-[65px] font-bold text-white whitespace-nowrap [-webkit-text-stroke:1px_white]">www.9m8.cn</div>
    </div>
  );
}

export default function App() {
  return (
    <div className="relative flex h-[1395px] w-[2160px] flex-col overflow-hidden bg-black [font-family:'Liberation_Sans','Noto_Sans_CJK_SC',sans-serif]">
      <TitleBar />
      <div className="flex h-[1322px] shrink-0">
        <div className="flex w-[1787px] shrink-0 flex-col">
          <ToolBar />
          <ChartArea />
          <DateRow />
          <BottomTabs />
        </div>
        <QuotePanel />
        <SideBar />
      </div>
      <StatusBar />
      <ImeBar />
      <Watermark />
    </div>
  );
}
